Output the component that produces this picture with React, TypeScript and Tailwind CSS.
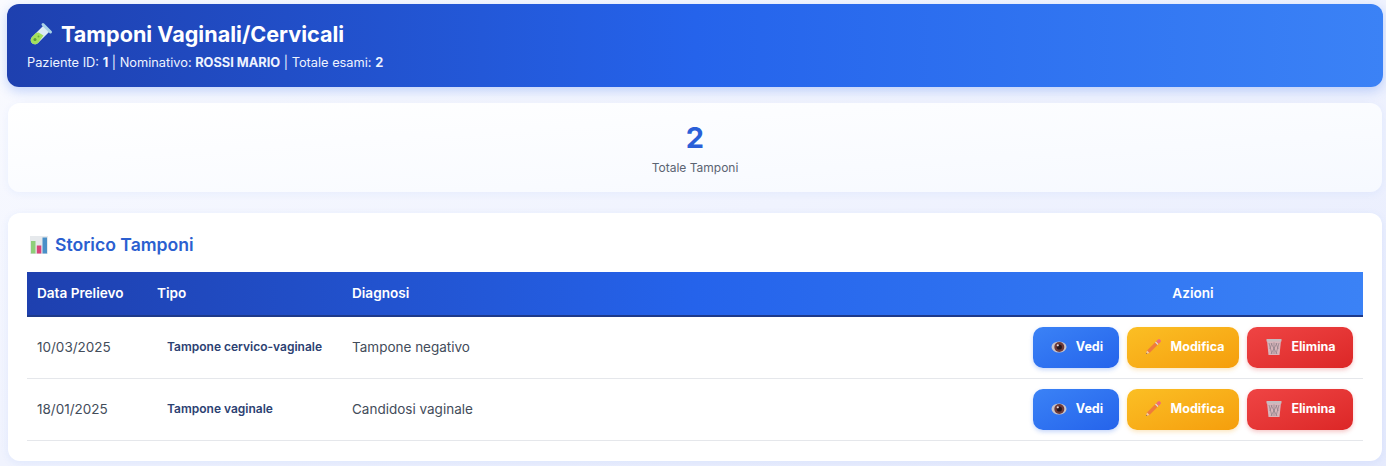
const FONT = "font-['Inter','Liberation_Sans',sans-serif]";

// Test tube emoji
function TubeIcon() {
  return (
    <svg width="24" height="24" viewBox="0 0 24 24" className="shrink-0">
      <path d="M15 3 21 9 9 21C7.300 22.700 4.500 22.700 2.900 21.100 1.300 19.500 1.300 16.700 3 15Z" fill="#dcecf4" />
      <path d="M9.500 10.500 14.500 13.500 9 21C7.300 22.700 4.500 22.700 2.900 21.100 1.300 19.500 1.300 16.700 3 15L7 11Z" fill="#a3e05c" />
      <circle cx="6" cy="17.500" r="1.500" fill="#5f9e35" />
      <circle cx="9.500" cy="14.500" r="1" fill="#6bab3c" />
      <path d="M14 2.500 21.500 10" stroke="#a9d3e6" strokeWidth="3" strokeLinecap="round" />
    </svg>
  );
}

// Bar chart emoji
function ChartIcon() {
  return (
    <svg width="18" height="18" viewBox="0 0 18 18" className="shrink-0">
      <rect width="18" height="18" fill="#e6e9ec" />
      <rect x="1" y="5" width="4.500" height="12.500" fill="#8fce7a" />
      <rect x="6.800" y="9.500" width="4.500" height="8" fill="#d9437a" />
      <rect x="12.500" y="1.500" width="4.500" height="16" fill="#4a90c8" />
    </svg>
  );
}

function EyeIcon() {
  return (
    <svg width="16" height="16" viewBox="0 0 16 16" className="shrink-0">
      <ellipse cx="8" cy="8" rx="7.500" ry="5.500" fill="#c9c3c9" />
      <circle cx="8.300" cy="8" r="5" fill="#6e3a38" />
      <circle cx="8.300" cy="8" r="2.600" fill="#24141a" />
      <circle cx="6.800" cy="6.300" r="1.100" fill="#e8d8d8" />
    </svg>
  );
}

function PencilIcon() {
  return (
    <svg width="18" height="18" viewBox="0 0 18 18" className="shrink-0">
      <path d="M12.500 3 15 5.500 5.500 15 2.500 15.500 3 12.500Z" fill="#ef7b3c" />
      <path d="M12.500 3 14 1.500C14.600 1 15.400 1 16 1.600L16.400 2C17 2.600 17 3.400 16.500 4L15 5.500Z" fill="#ee6a7c" />
      <path d="M11.500 4 14 6.500" stroke="#dcdcdc" strokeWidth="1.300" />
      <path d="M3 12.500 5.500 15 2 16Z" fill="#f3cfa5" />
      <path d="M2.600 14.700 3.300 15.400 2 16Z" fill="#5a4033" />
    </svg>
  );
}

function BinIcon() {
  return (
    <svg width="16" height="18" viewBox="0 0 16 18" className="shrink-0">
      <path d="M1 2.500H15L13.500 17H2.500Z" fill="#d8b4ba" />
      <rect x="0.500" y="1" width="15" height="2.500" fill="#c4bcc0" />
      <path d="M3 5 6 16M6 5 3.800 11M8 4.500V16M5 5 11 16M11 5 5 16M13 5 10 16M10 5 12.200 11" stroke="#8d7f88" strokeWidth="0.700" fill="none" />
    </svg>
  );
}

function ActionButton({ className, icon, label }: { className: string; icon: React.ReactNode; label: string }) {
  return (
    <button className={`flex h-[41px] items-center justify-center gap-[9px] rounded-[10px] pl-0.5 text-[12.500px] font-bold text-white ${className}`}>
      {icon}
      <span className="pt-px">{label}</span>
    </button>
  );
}

const ROWS = [
  { date: "10/03/2025", type: "Tampone cervico-vaginale", diagnosis: "Tampone negativo" },
  { date: "18/01/2025", type: "Tampone vaginale", diagnosis: "Candidosi vaginale" },
];

export default function App() {
  return (
    <div className={`${FONT} h-[466px] overflow-hidden bg-gradient-to-br from-[#fafbff] to-[#e6ebfd] pt-1 pr-1 pl-2`}>
      {/* Header */}
      <div className="-mx-px h-[83px] rounded-[12px] bg-gradient-to-r from-[#1e40af] via-[#2563eb] to-[#3b82f6] px-5 pt-[15px] text-white shadow-[0_4px_12px_rgba(37,99,235,0.25)]">
        <div className="flex items-center gap-2 pl-0.5">
          <TubeIcon />
          <h1 className="text-[21.600px] leading-[30px] font-bold">Tamponi Vaginali/Cervicali</h1>
        </div>
        <p className="mt-[5px] text-[12.800px] leading-[18px] text-[#eef3ff]">
          Paziente ID: <b>1</b> | Nominativo: <b>ROSSI MARIO</b> | Totale esami: <b>2</b>
        </p>
      </div>

      {/* Counter */}
      <div className="mt-4 flex h-[89px] flex-col items-center rounded-[12px] bg-gradient-to-br from-white to-[#f6f9ff] pt-[17px] shadow-[0_2px_8px_rgba(37,99,235,0.06)]">
        <div className="text-[29px] leading-[36px] font-bold text-[#2a5fd8]">2</div>
        <div className="mt-[3px] text-[12px] leading-[18px] text-[#5b6472]">Totale Tamponi</div>
      </div>

      {/* History */}
      <div className="mt-[21px] h-[248px] rounded-[12px] bg-white px-[19px] pt-[20px] shadow-[0_2px_8px_rgba(37,99,235,0.08)]">
        <div className="flex items-center gap-[7px] pl-[3px]">
          <ChartIcon />
          <h2 className="text-[17.600px] leading-[24px] font-semibold text-[#2b5fd0]">Storico Tamponi</h2>
        </div>
        <table className="mt-[15px] w-full table-fixed border-collapse">
          <colgroup>
            <col className="w-[120px]" />
            <col className="w-[195px]" />
            <col />
            <col className="w-[340px]" />
          </colgroup>
          <thead>
            <tr className="h-[44px] border-b-2 border-[#1e3a8a] bg-gradient-to-r from-[#1e40af] via-[#2563eb] to-[#3b82f6] text-[13.600px] font-semibold text-white">
              <th className="px-[10px] text-left font-semibold">Data Prelievo</th>
              <th className="px-[10px] text-left font-semibold">Tipo</th>
              <th className="px-[10px] text-left font-semibold">Diagnosi</th>
              <th className="px-[10px] text-center font-semibold">Azioni</th>
            </tr>
          </thead>
          <tbody>
            {ROWS.map((row) => (
              <tr key={row.date} className="h-[62px] border-b border-[#e5e7eb] text-[13.500px] text-[#434c5a]">
                <td className="px-[10px]">{row.date}</td>
                <td className="px-5 text-[12px] font-semibold whitespace-nowrap text-[#2c4172]">{row.type}</td>
                <td className="px-[10px]">{row.diagnosis}</td>
                <td className="px-[10px]">
                  <div className="flex justify-end gap-2">
                    <ActionButton
                      className="w-[86px] bg-gradient-to-br from-[#3b82f6] to-[#2563eb] shadow-[0_2px_4px_rgba(37,99,235,0.25)]"
                      icon={<EyeIcon />}
                      label="Vedi"
                    />
                    <ActionButton
                      className="w-[112px] bg-gradient-to-br from-[#fbbf24] to-[#f59e0b] shadow-[0_2px_4px_rgba(245,158,11,0.25)]"
                      icon={<PencilIcon />}
                      label="Modifica"
                    />
                    <ActionButton
                      className="w-[106px] bg-gradient-to-br from-[#ef4444] to-[#dc2626] shadow-[0_2px_4px_rgba(220,38,38,0.25)]"
                      icon={<BinIcon />}
                      label="Elimina"
                    />
                  </div>
                </td>
              </tr>
            ))}
          </tbody>
        </table>
      </div>
    </div>
  );
}
